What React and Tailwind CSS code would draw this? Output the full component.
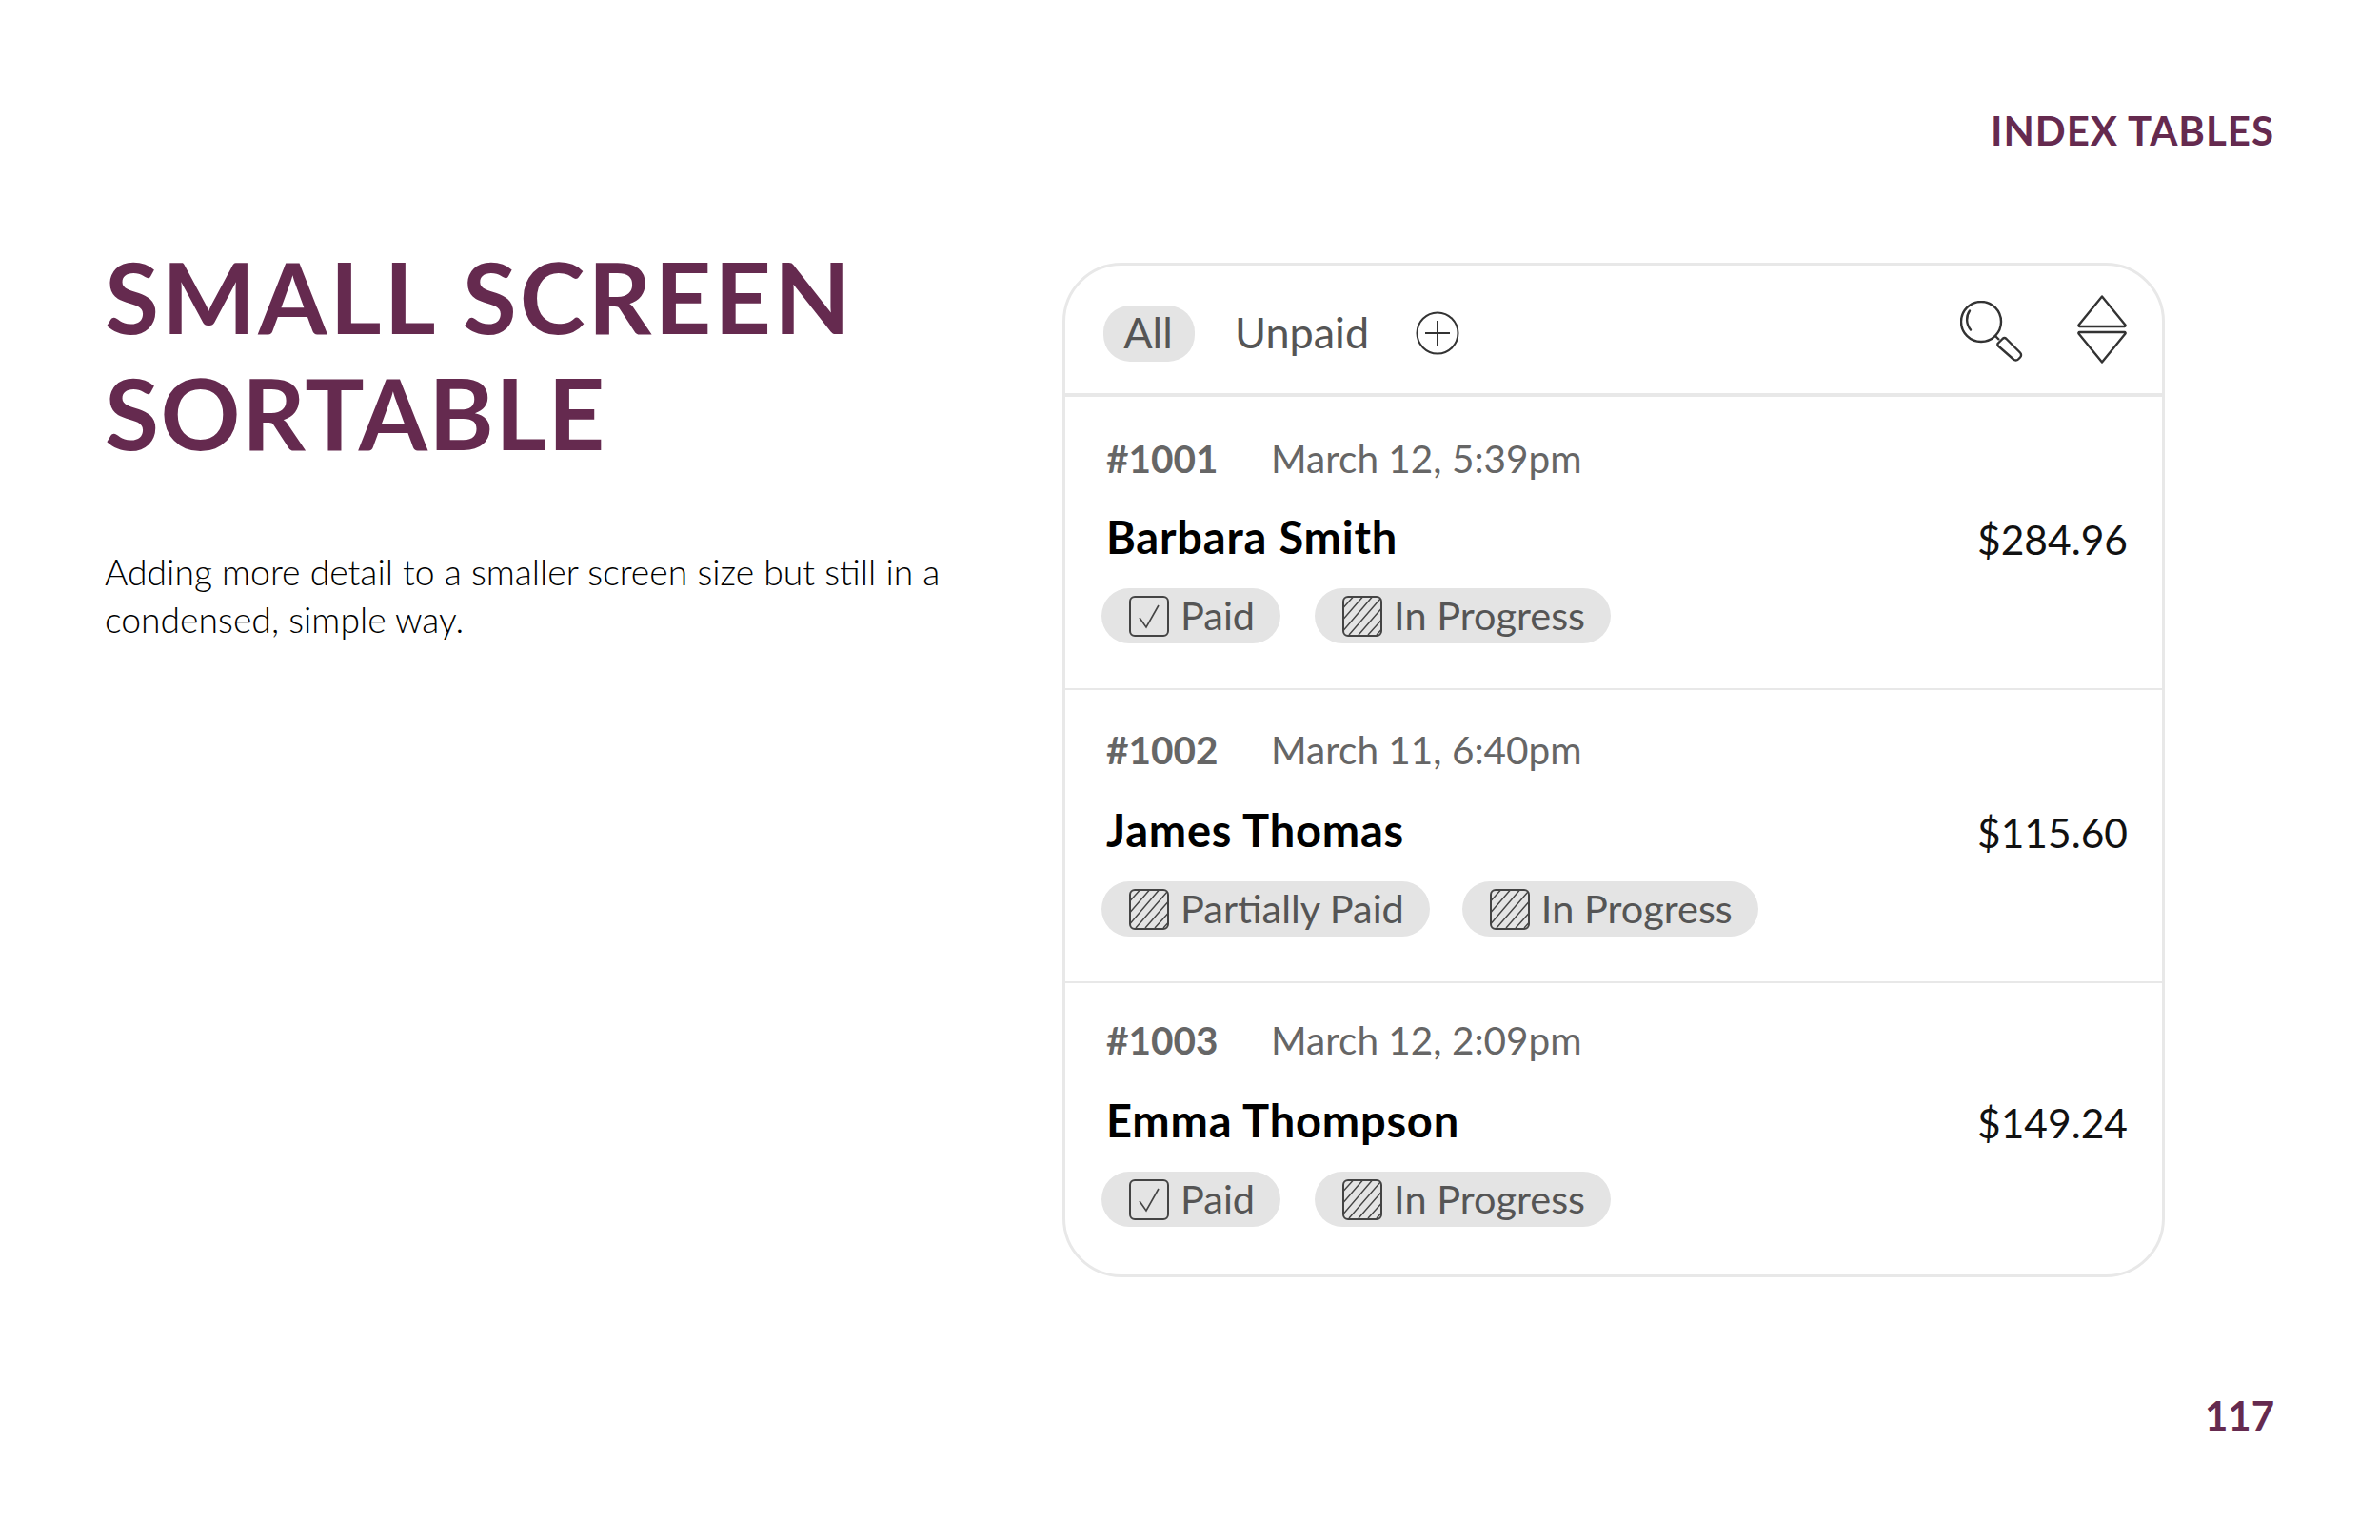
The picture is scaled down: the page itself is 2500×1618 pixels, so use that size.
const font = { fontFamily: 'Lato, "Noto Sans", sans-serif' }

const orders = [
  {
    id: '#1001',
    date: 'March 12, 5:39pm',
    name: 'Barbara Smith',
    total: '$284.96',
    topGap: 'pt-[40px]',
    nameGap: 'mt-[29px]',
    badgeGap: 'gap-[36px]',
    badges: [
      { label: 'Paid', done: true },
      { label: 'In Progress' },
    ],
  },
  {
    id: '#1002',
    date: 'March 11, 6:40pm',
    name: 'James Thomas',
    total: '$115.60',
    topGap: 'pt-[38px]',
    nameGap: 'mt-[31px]',
    badgeGap: 'gap-[34px]',
    badges: [{ label: 'Partially Paid' }, { label: 'In Progress' }],
  },
  {
    id: '#1003',
    date: 'March 12, 2:09pm',
    name: 'Emma Thompson',
    total: '$149.24',
    topGap: 'pt-[35px]',
    nameGap: 'mt-[31px]',
    badgeGap: 'gap-[36px]',
    badges: [
      { label: 'Paid', done: true },
      { label: 'In Progress' },
    ],
  },
]

const PlusIcon = () => (
  <svg width="46" height="46" viewBox="0 0 46 46" fill="none" stroke="#333" strokeWidth="2">
    <circle cx="23" cy="23" r="21.5" />
    <path d="M23 10v26M10 23h26" />
  </svg>
)

const SearchIcon = () => (
  <svg width="66" height="66" viewBox="0 0 66 66" fill="none" stroke="#333" strokeWidth="2.4" strokeLinejoin="round">
    <circle cx="22" cy="22" r="21" />
    <path d="M10 10.5c-4 5.5-4 14 1 20" strokeLinecap="round" />
    <path d="M37 37l4 4" />
    <path d="M40 44.5l4.5-4.5a3 3 0 0 1 4 0l14.5 14.5a3.5 3.5 0 0 1 0 5l-2 2a3.5 3.5 0 0 1-5 0L40 47.5a2 2 0 0 1 0-3z" />
  </svg>
)

const SortIcon = () => (
  <svg width="52" height="72" viewBox="0 0 52 72" fill="none" stroke="#333" strokeWidth="2.4" strokeLinejoin="round">
    <path d="M26 1.5L50.5 31.5a1 1 0 0 1-.8 1.5H2.3a1 1 0 0 1-.8-1.5z" />
    <path d="M26 70.500L50.500 40.500a1 1 0 0 0-.8-1.500H2.300a1 1 0 0 0-.8 1.500z" />
  </svg>
)

const CheckIcon = () => (
  <svg width="42" height="43" viewBox="0 0 42 43" fill="none" stroke="#444" strokeWidth="2">
    <rect x="1" y="1" width="40" height="41" rx="5" />
    <path d="M11 23l7 10L31 10" strokeWidth="1.6" />
  </svg>
)

const HatchIcon = () => (
  <svg width="42" height="43" viewBox="0 0 42 43" fill="none" stroke="#444">
    <path
      d="M1.500 12L11 1.500M1.500 24L21 1.500M1.500 36L31 1.500M7 41L40 3M17 41L40.500 14M27 41L40.500 26M36 41l4.500-5"
      strokeWidth="1.400"
    />
    <rect x="1" y="1" width="40" height="41" rx="5" strokeWidth="2" />
  </svg>
)

const Badge = ({ label, done }) => (
  <div className="flex h-[58px] items-center gap-[12px] rounded-[29px] bg-[#e4e4e4] pl-[29px] pr-[27px]">
    {done ? <CheckIcon /> : <HatchIcon />}
    <span className="text-[41.5px] leading-none text-[#555555]">{label}</span>
  </div>
)

const OrderRow = ({ order }) => (
  <div className={`flex h-[308px] flex-col border-b-2 border-[#e8e8e8] pl-[43px] pr-[36px] last:h-[306px] last:border-b-0 ${order.topGap}`}>
    <div className="flex items-center text-[40.5px] leading-[50px] text-[#666666]">
      <span className="w-[173px] font-bold">{order.id}</span>
      <span>{order.date}</span>
    </div>
    <div className={`flex items-center justify-between ${order.nameGap}`}>
      <span className="text-[47px] font-bold leading-[56px] tracking-[0.8px] text-black">{order.name}</span>
      <span className="translate-y-[3px] text-[42.5px] leading-[56px] text-[#111111]">{order.total}</span>
    </div>
    <div className={`-ml-[5px] mt-[26px] flex ${order.badgeGap}`}>
      {order.badges.map((badge) => (
        <Badge key={badge.label} label={badge.label} done={badge.done} />
      ))}
    </div>
  </div>
)

export default function App() {
  return (
    <div className="flex h-[1618px] w-[2500px] flex-col bg-white pl-[110px] pr-[111px]" style={font}>
      <div className="pt-[112px] text-right text-[42px] font-bold leading-[50px] tracking-[1px] text-[#652a4f]">
        INDEX TABLES
      </div>

      <div className="mt-[114px] flex">
        <div className="w-[1006px]">
          <h1 className="-mt-[26px] text-[104px] font-bold leading-[122px] tracking-[3px] text-[#652a4f]">
            SMALL SCREEN
            <br />
            <span className="tracking-[1.400px]">SORTABLE</span>
          </h1>
          <p className="mt-[82px] text-[37.300px] font-light leading-[50px] text-black">
            Adding more detail to a smaller screen size but still in a
            <br />
            condensed, simple way.
          </p>
        </div>

        <div className="w-[1158px] overflow-hidden rounded-[62px] border-[3px] border-[#e8e8e8]">
          <div className="flex h-[138px] items-center justify-between border-b-[4px] border-[#e8e8e8] pl-[40px] pr-[37px]">
            <div className="flex items-center pt-[8px] text-[45px] text-[#555555]">
              <span className="flex h-[59px] w-[96px] items-center justify-center rounded-[28px] bg-[#e4e4e4] pr-[2px]">All</span>
              <span className="ml-[42px]">Unpaid</span>
              <span className="ml-[49px] flex">
                <PlusIcon />
              </span>
            </div>
            <div className="flex items-center gap-[57px]">
              <span className="flex pt-[6px]">
                <SearchIcon />
              </span>
              <SortIcon />
            </div>
          </div>
          {orders.map((order) => (
            <OrderRow key={order.id} order={order} />
          ))}
        </div>
      </div>

      <div className="mt-[120px] text-right text-[42px] font-bold leading-[50px] text-[#652a4f]">117</div>
    </div>
  )
}
